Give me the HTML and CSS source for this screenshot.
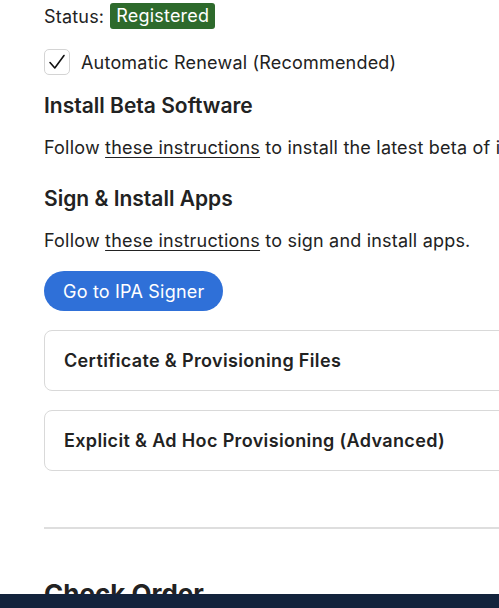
FILE: index.html
```html
<!DOCTYPE html>
<html lang="en">
<head>
  <meta charset="UTF-8" />
  <meta name="viewport" content="width=device-width, initial-scale=1.0"/>
  <title>Account</title>
  <link rel="stylesheet" href="styles.css">
</head>
<body>

  <div class="page">
    <div class="status-row">
      <span>Status:</span>
      <span class="badge">Registered</span>
    </div>

    <label class="check-row">
      <span class="checkbox">
        <svg width="18" height="18" viewBox="0 0 18 18">
          <path d="M2 9.5 L6.8 15 L16 2.5" fill="none" stroke="#111" stroke-width="1.6" stroke-linecap="round" stroke-linejoin="round"/>
        </svg>
      </span>
      Automatic Renewal (Recommended)
    </label>

    <h2>Install Beta Software</h2>
    <p>Follow <a href="#">these instructions</a> to install the latest beta of iOS on your device.</p>

    <h2>Sign &amp; Install Apps</h2>
    <p>Follow <a href="#">these instructions</a> to sign and install apps.</p>

    <button class="pill">Go to IPA Signer</button>

    <div class="panel">Certificate &amp; Provisioning Files</div>
    <div class="panel">Explicit &amp; Ad Hoc Provisioning (Advanced)</div>

    <hr>

    <h1>Check Order</h1>
  </div>

  <!-- bottom bar -->
  <div class="bottom-bar"></div>

</body>
</html>
```

FILE: styles.css
```css
html, body {
  margin: 0;
  overflow: hidden;
  background: #fff;
}

body {
  font-family: Inter, 'Noto Sans', sans-serif;
  color: #222;
  font-size: 18px;
  letter-spacing: 0.2px;
}

.page {
  width: 640px;
  padding: 3px 0 0 44px;
}

.status-row {
  display: flex;
  align-items: center;
  gap: 6px;
  height: 26px;
}

.badge {
  background: #2e6a2c;
  color: #fff;
  border-radius: 3px;
  padding: 0 6px;
  height: 26px;
  line-height: 26px;
}

.check-row {
  display: flex;
  align-items: center;
  gap: 11px;
  margin-top: 20px;
  height: 26px;
}

.checkbox {
  width: 24px;
  height: 24px;
  border: 1px solid #d4d4d4;
  border-radius: 5px;
  display: flex;
  align-items: center;
  justify-content: center;
}

h2 {
  font-size: 21px;
  font-weight: 600;
  margin: 18px 0 0;
  line-height: 26px;
  letter-spacing: 0;
}

p {
  margin: 18px 0 0;
  line-height: 22px;
}

p + h2 {
  margin-top: 27px;
}

a {
  color: #222;
  text-decoration: underline;
  text-underline-offset: 3px;
  text-decoration-thickness: 1px;
}

.pill {
  display: block;
  margin-top: 19px;
  height: 40px;
  padding: 0 19px;
  background: #2f70d8;
  color: #fff;
  border: none;
  border-radius: 20px;
  font-family: inherit;
  font-size: 18px;
  letter-spacing: 0.2px;
}

.panel {
  margin-top: 19px;
  height: 59px;
  border: 1px solid #d9d9d9;
  border-radius: 8px;
  display: flex;
  align-items: center;
  padding-left: 19px;
  font-weight: 600;
  letter-spacing: 0.35px;
}

hr {
  border: none;
  border-top: 2px solid #dedede;
  margin: 56px 0 0;
}

h1 {
  font-size: 26px;
  font-weight: 700;
  margin: 49px 0 0;
  letter-spacing: 0;
}

.bottom-bar {
  position: fixed;
  left: 0;
  right: 0;
  bottom: 0;
  height: 14px;
  background: #13233c;
}
```
